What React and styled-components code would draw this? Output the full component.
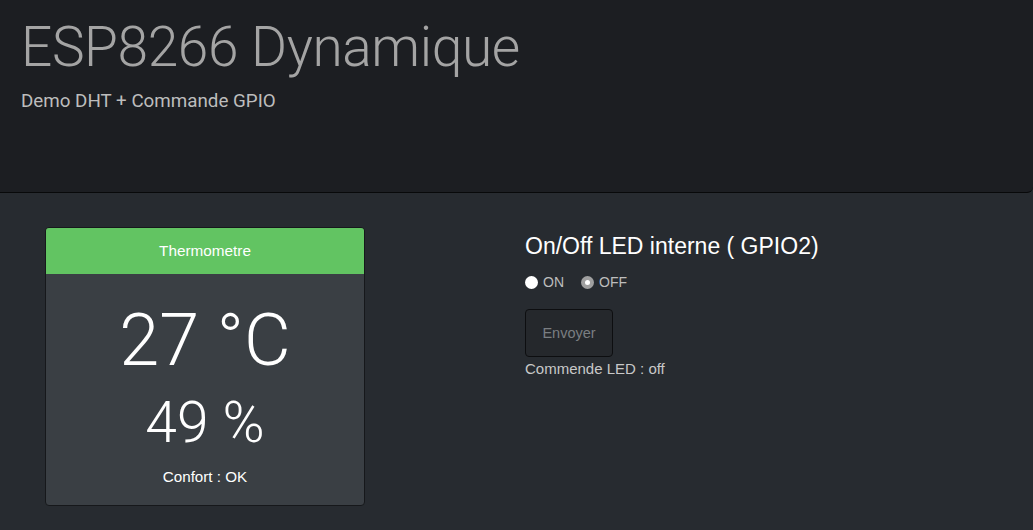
import React, { Component } from "react"
import styled, { createGlobalStyle } from 'styled-components';

const colors = {
  page: '#272b30',
  header: '#1c1e22',
  panel: '#3a3f44',
  green: '#62c462',
  text: '#c8c8c8',
};

const GlobalStyle = createGlobalStyle`
  html, body {
    margin: 0;
    padding: 0;
    background-color: ${colors.page};
    font-family: "Liberation Sans", Arial, sans-serif;
    color: ${colors.text};
  }
`;

class App extends Component {
  state = { led: 'off' }

  handleChange = (e) => this.setState({ led: e.target.value })

  render = () => {
    const { led } = this.state;
    return (
      <Layout>
        <GlobalStyle />
        <Jumbotron>
          <Title>ESP8266 Dynamique</Title>
          <Subtitle>Demo DHT + Commande GPIO</Subtitle>
        </Jumbotron>
        <Content>
          <Panel>
            <PanelHeading>Thermometre</PanelHeading>
            <PanelBody>
              <Temperature>27 °C</Temperature>
              <Humidity>49 %</Humidity>
              <Comfort>Confort : OK</Comfort>
            </PanelBody>
          </Panel>
          <Command>
            <CommandTitle>On/Off LED interne ( GPIO2)</CommandTitle>
            <RadioRow>
              <RadioLabel>
                <Radio type="radio" name="led" value="on" checked={led === 'on'} onChange={this.handleChange} />
                ON
              </RadioLabel>
              <RadioLabel>
                <Radio type="radio" name="led" value="off" checked={led === 'off'} onChange={this.handleChange} />
                OFF
              </RadioLabel>
            </RadioRow>
            <SendButton>Envoyer</SendButton>
            <Status>Commende LED : off</Status>
          </Command>
        </Content>
      </Layout>);
  }
}

const Layout = styled.div`
  width: 100%;
  min-height: 530px;
  background-color: ${colors.page};
`;

const Jumbotron = styled.div`
  height: 193px;
  box-sizing: border-box;
  background-color: ${colors.header};
  border-bottom: 1px solid #08090a;
  border-bottom-right-radius: 6px;
  padding: 17px 21px 0;
`;

const Title = styled.h1`
  margin: 0;
  font-family: Roboto, "Liberation Sans", sans-serif;
  font-weight: 300;
  font-size: 55px;
  line-height: 60px;
  color: #a4a4a4;
  letter-spacing: -0.4px;
`;

const Subtitle = styled.p`
  margin: 13px 0 0;
  font-family: Roboto, "Liberation Sans", sans-serif;
  font-size: 18.8px;
  color: #bdbdbd;
`;

const Content = styled.div`
  display: flex;
  align-items: flex-start;
  padding: 34px 0 0 45px;
`;

const Panel = styled.div`
  width: 320px;
  box-sizing: border-box;
  border: 1px solid #16181b;
  border-radius: 4px;
  overflow: hidden;
  background-color: ${colors.panel};
`;

const PanelHeading = styled.div`
  height: 46px;
  display: flex;
  align-items: center;
  justify-content: center;
  background-color: ${colors.green};
  color: #fff;
  font-size: 15.3px;
`;

const PanelBody = styled.div`
  height: 231px;
  display: flex;
  flex-direction: column;
  align-items: center;
  color: #fff;
`;

const Temperature = styled.div`
  margin-top: 27px;
  font-family: Roboto, "Liberation Sans", sans-serif;
  font-weight: 300;
  font-size: 72px;
  line-height: 80px;
`;

const Humidity = styled.div`
  margin-top: 12px;
  font-family: Roboto, "Liberation Sans", sans-serif;
  font-weight: 300;
  font-size: 57px;
  line-height: 60px;
`;

const Comfort = styled.div`
  margin-top: 15px;
  font-size: 15.2px;
`;

const Command = styled.div`
  margin-left: 160px;
  display: flex;
  flex-direction: column;
  align-items: flex-start;
`;

const CommandTitle = styled.h3`
  margin: 6px 0 0;
  font-weight: 400;
  font-size: 23px;
  line-height: 26px;
  color: #fff;
`;

const RadioRow = styled.div`
  display: flex;
  gap: 17px;
  margin-top: 15px;
`;

const RadioLabel = styled.label`
  display: flex;
  align-items: center;
  gap: 5px;
  font-size: 14px;
  color: #bdbdbd;
`;

const Radio = styled.input`
  appearance: none;
  margin: 0;
  width: 13px;
  height: 13px;
  border-radius: 50%;
  background-color: #fff;
  position: relative;

  &:checked {
    background-color: #a0a0a0;
  }

  &:checked::after {
    content: '';
    position: absolute;
    left: 4px;
    top: 4px;
    width: 5px;
    height: 5px;
    border-radius: 50%;
    background-color: #fff;
  }
`;

const SendButton = styled.button`
  margin-top: 19px;
  width: 88px;
  height: 48px;
  background-color: #25282c;
  border: 1px solid #0d0e10;
  border-radius: 4px;
  color: #7a7e82;
  font-family: "Liberation Sans", Arial, sans-serif;
  font-size: 14.5px;
`;

const Status = styled.div`
  margin-top: 3px;
  font-size: 15px;
  color: #c8c8c8;
`;

export default App;
